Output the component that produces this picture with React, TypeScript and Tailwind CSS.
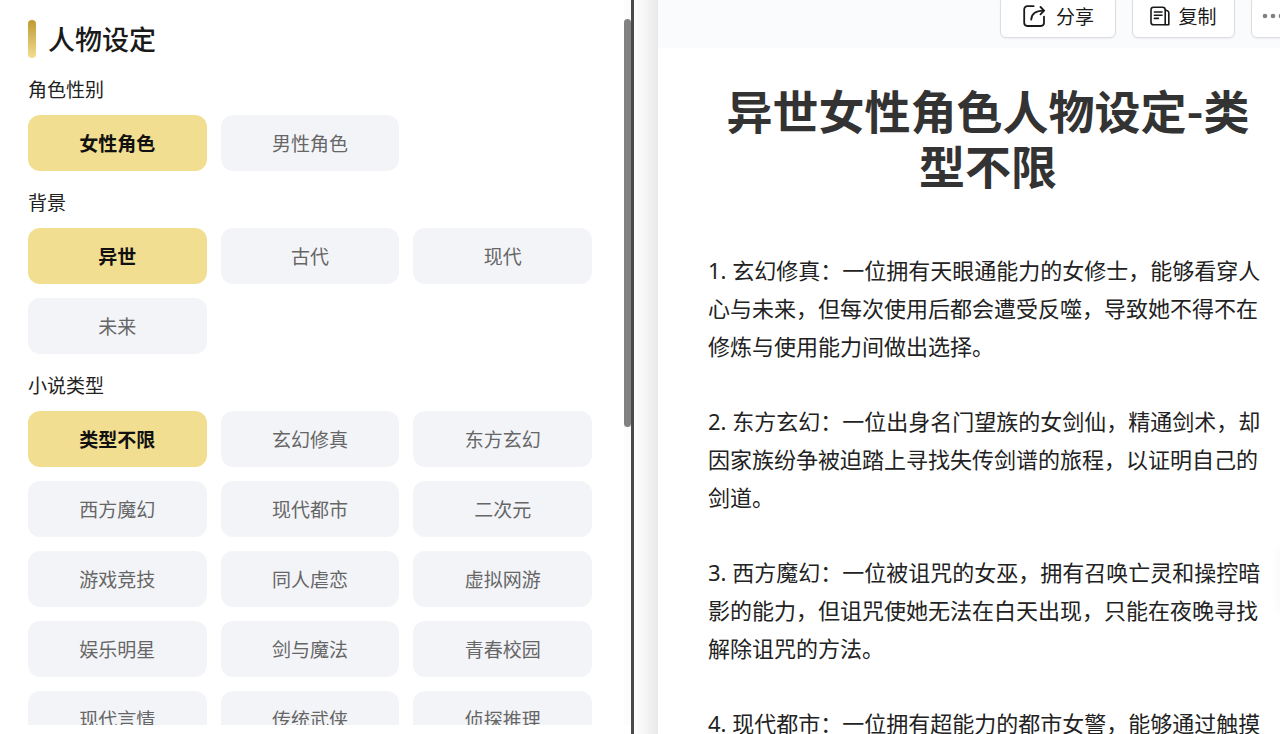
import { useState } from "react"
import clsx from "clsx"

const sections = [
  {
    key: "gender",
    name: "角色性别",
    options: ["女性角色", "男性角色"]
  },
  {
    key: "background",
    name: "背景",
    options: ["异世", "古代", "现代", "未来"]
  },
  {
    key: "genre",
    name: "小说类型",
    options: [
      "类型不限", "玄幻修真", "东方玄幻",
      "西方魔幻", "现代都市", "二次元",
      "游戏竞技", "同人虐恋", "虚拟网游",
      "娱乐明星", "剑与魔法", "青春校园",
      "现代言情", "传统武侠", "侦探推理"
    ]
  }
]

const paragraphs = [
  "1. 玄幻修真：一位拥有天眼通能力的女修士，能够看穿人心与未来，但每次使用后都会遭受反噬，导致她不得不在修炼与使用能力间做出选择。",
  "2. 东方玄幻：一位出身名门望族的女剑仙，精通剑术，却因家族纷争被迫踏上寻找失传剑谱的旅程，以证明自己的剑道。",
  "3. 西方魔幻：一位被诅咒的女巫，拥有召唤亡灵和操控暗影的能力，但诅咒使她无法在白天出现，只能在夜晚寻找解除诅咒的方法。",
  "4. 现代都市：一位拥有超能力的都市女警，能够通过触摸"
]

function ShareIcon() {
  return (
    <svg className="size-6" viewBox="0 0 24 24" fill="none" stroke="currentColor" strokeWidth="1.8" strokeLinecap="round" strokeLinejoin="round" aria-hidden="true">
      <path d="M11.600 2.200H5.400a3.200 3.200 0 0 0-3.200 3.200v13.400a3.200 3.200 0 0 0 3.200 3.200h13.400a3.200 3.200 0 0 0 3.200-3.200v-6.200" />
      <path d="M9.200 15.600c.3-5.400 4.200-8.900 12.400-9" />
      <path d="m18.500 3 3.600 3.600-3.600 3.700" />
    </svg>
  )
}

function CopyIcon() {
  return (
    <svg className="size-5" viewBox="0 0 20 20" fill="none" stroke="currentColor" strokeWidth="1.6" strokeLinecap="round" strokeLinejoin="round" aria-hidden="true">
      <path d="M3.600 1.200h9a2.600 2.600 0 0 1 2.600 2.600v15H3.600A2.600 2.600 0 0 1 1 16.200V3.800a2.600 2.600 0 0 1 2.600-2.600Z" />
      <path d="M15.400 3.900 17.700 5a1.800 1.800 0 0 1 1.100 1.700v12.100h-3.600" />
      <path d="M4.400 6h7.600M4.400 9.200h7.600M4.400 12.400h4" />
    </svg>
  )
}

function MoreIcon() {
  return (
    <svg className="h-5 w-6 shrink-0 text-[#808080]" viewBox="0 0 24 20" fill="currentColor" aria-hidden="true">
      <circle cx="4" cy="10" r="2.3" />
      <circle cx="12" cy="10" r="2.3" />
      <circle cx="20" cy="10" r="2.3" />
    </svg>
  )
}

export default function App() {
  const [selected, setSelected] = useState<Record<string, string>>({
    gender: "女性角色",
    background: "异世",
    genre: "类型不限"
  })

  const toolbarButton =
    "flex h-[42px] items-center justify-center rounded-md border border-[#dcdde0] bg-white pb-0.5 text-[19px] text-[#1a1a1a] shadow-xs"

  return (
    <div className="grid h-screen grid-cols-[634fr_646fr] overflow-hidden bg-white font-['Noto_Sans_CJK_SC',sans-serif]">
      <aside className="flex min-h-0 min-w-0 border-r-3 border-[#4b4b4b] pb-[9px]">
        <div className="min-w-0 flex-1 overflow-hidden pt-5 pr-8 pl-7">
          <div className="flex h-[38px] items-center gap-3">
            <span className="h-full w-2 rounded-full bg-linear-to-b from-[#c09a2c] to-[#f2de90]" />
            <h2 className="text-[27px] font-medium text-[#1a1a1a]">人物设定</h2>
          </div>

          {sections.map((section) => (
            <section key={section.key} className="pt-[17px]" aria-labelledby={section.key}>
              <h3 id={section.key} className="mb-3 text-[19px] leading-7 text-[#222]">
                {section.name}
              </h3>
              <div className="grid grid-cols-3 gap-3.5">
                {section.options.map((option) => (
                  <button
                    key={option}
                    type="button"
                    aria-pressed={selected[section.key] === option}
                    onClick={() => setSelected({ ...selected, [section.key]: option })}
                    className={clsx(
                      "h-14 rounded-xl text-[19px]",
                      selected[section.key] === option
                        ? "bg-[#f2de90] font-bold text-[#111]"
                        : "bg-[#f3f4f8] text-[#666]"
                    )}
                  >
                    {option}
                  </button>
                ))}
              </div>
            </section>
          ))}
        </div>

        <div className="w-[7px] bg-[#fcfcfc] pt-[19px]">
          <div className="h-[408px] rounded-full bg-[#828282]" />
        </div>
      </aside>

      <main className="relative flex min-h-0 min-w-0 overflow-hidden">
        <div className="w-6 shrink-0 bg-linear-to-r from-white to-[#e9e9e9]" />
        <div className="min-w-0 flex-1">
          <header className="flex h-12 items-start justify-end gap-4 overflow-hidden bg-[#fafbfd]">
            <button type="button" className={clsx(toolbarButton, "-mt-1 w-[116px] gap-2.5")}>
              <ShareIcon />
              分享
            </button>
            <button type="button" className={clsx(toolbarButton, "-mt-1 w-[103px] gap-2")}>
              <CopyIcon />
              复制
            </button>
            <button type="button" aria-label="更多" className={clsx(toolbarButton, "-mt-1 -mr-3.5 w-[43px]")}>
              <MoreIcon />
            </button>
          </header>

          <article className="pt-[34px] pr-3 pl-[50px] text-[#222]">
            <h1 className="mb-[59px] text-center text-[46px] leading-[55px] font-bold text-[#333]">
              异世女性角色人物设定-类型不限
            </h1>
            <div className="flex flex-col gap-[37px] font-['Noto_Sans','Noto_Sans_CJK_SC',sans-serif] text-[22px] leading-[38px]">
              {paragraphs.map((paragraph) => (
                <p key={paragraph}>{paragraph}</p>
              ))}
            </div>
          </article>
        </div>

        {/* edge of the floating side handle */}
        <div className="absolute top-[540px] -right-11 h-20 w-10 rounded-full shadow-[0_0_16px_rgba(0,0,0,0.08)]" />
      </main>
    </div>
  )
}
